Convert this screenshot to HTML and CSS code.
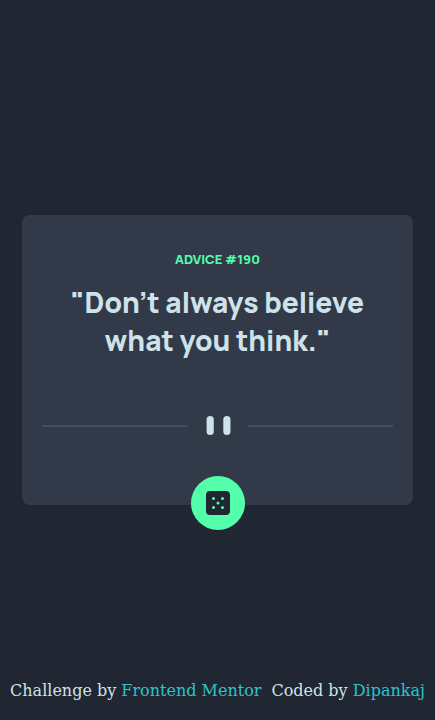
FILE: index.html
```html
<!DOCTYPE html>
<html lang="en">
<head>
<meta charset="utf-8">
<meta name="viewport" content="width=device-width, initial-scale=1">
<title>Advice generator</title>
<link rel="stylesheet" href="styles.css">
</head>
<body>
<main class="page">
  <section class="card">
    <h1 class="label">ADVICE #190</h1>
    <p class="quote">"Don’t always believe what you think."</p>
    <svg class="divider" viewBox="0 0 295 16" aria-hidden="true">
      <g fill="#4F5D74"><path d="M0 8h122v1H0z"/><path d="M173 8h122v1H173z"/></g>
      <g fill="#CEE3E9"><rect x="138" y="0" width="6" height="16" rx="3"/><rect x="152" y="0" width="6" height="16" rx="3"/></g>
    </svg>
    <button class="dice" type="button" aria-label="New advice">
      <svg width="24" height="24" viewBox="0 0 24 24" aria-hidden="true"><path fill="#202733" d="M20 0H4a4.005 4.005 0 0 0-4 4v16a4.005 4.005 0 0 0 4 4h16a4.005 4.005 0 0 0 4-4V4a4.005 4.005 0 0 0-4-4ZM7.500 18a1.500 1.500 0 1 1 0-3 1.500 1.500 0 0 1 0 3Zm0-9a1.500 1.500 0 1 1 0-3 1.500 1.500 0 0 1 0 3Zm4.500 4.500a1.500 1.500 0 1 1 0-3 1.500 1.500 0 0 1 0 3Zm4.500 4.500a1.500 1.500 0 1 1 0-3 1.500 1.500 0 0 1 0 3Zm0-9a1.500 1.500 0 1 1 0-3 1.500 1.500 0 0 1 0 3Z"/></svg>
    </button>
  </section>
</main>
<footer class="footer">
  <span>Challenge by <a href="#">Frontend Mentor</a></span>
  <span>Coded by <a href="#">Dipankaj</a></span>
</footer>
</body>
</html>
```
FILE: styles.css
```css
* { box-sizing: border-box; }
body {
  margin: 0;
  min-height: 100vh;
  background: #202632;
  color: #cee3e9;
  font-family: "DejaVu Serif", serif;
  font-size: 16px;
  display: grid;
}
.page, .footer { grid-area: 1 / 1; }
.page { display: grid; align-items: center; padding: 0 22px; }
.card {
  position: relative;
  display: flex;
  flex-direction: column;
  align-items: center;
  padding: 36px 0 69px;
  border-radius: 8px;
  background: #323a49;
  font-family: Manrope, Inter, sans-serif;
  text-align: center;
}
.label { margin: 0 0 16px; font-size: 13px; line-height: 16px; font-weight: 800; color: #53ffaa; }
.quote { margin: 0 0 57px; padding: 0 20px; font-size: 28px; line-height: 38px; font-weight: 800; }
.divider { width: 90%; }
.dice {
  position: absolute;
  bottom: -25px;
  display: grid;
  place-items: center;
  width: 54px;
  height: 54px;
  padding: 0;
  border: 0;
  border-radius: 50%;
  background: #53ffaa;
  cursor: pointer;
}
.footer {
  z-index: 1;
  align-self: end;
  display: flex;
  justify-content: center;
  gap: 10px;
  padding-bottom: 20px;
  white-space: nowrap;
}
.footer a { color: #2bc4cb; text-decoration: none; }
```
